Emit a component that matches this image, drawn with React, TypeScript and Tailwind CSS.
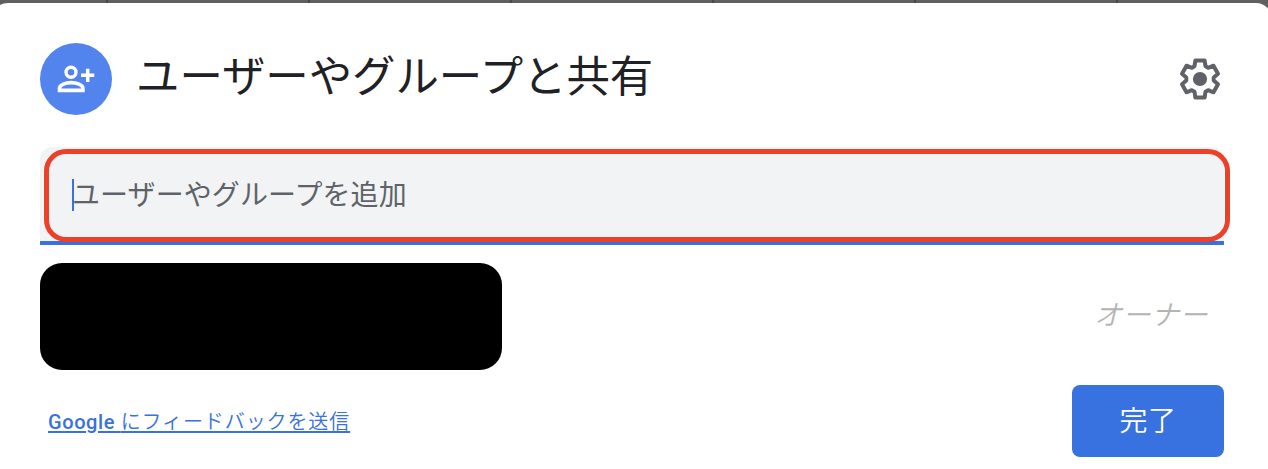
import React from "react";

const gridLines = [0, 1, 2, 3, 4, 5];

function PersonAddIcon() {
  return (
    <svg width="72" height="72" viewBox="0 0 72 72" fill="none" stroke="#fff">
      <circle cx="31" cy="29.3" r="5" strokeWidth="3.4" />
      <path
        d="M19.5 47.4V45.2C19.5 41.6 26 39.6 31.2 39.6S42.9 41.6 42.9 45.2V47.4Z"
        strokeWidth="3.6"
      />
      <path d="M41 32.3H54.3M47.7 25.7V39" strokeWidth="3.5" />
    </svg>
  );
}

function GearIcon() {
  return (
    <svg width="48" height="48" viewBox="-24 -24 48 48" fill="none">
      <path
        d="M-4.6-18.6H4.6L5.5-12.7L8.15-11.2L13.5-13.3L18-5.2L13.7-1.45V1.45L18 5.2L13.5 13.3L8.15 11.2L5.5 12.7L4.6 18.6H-4.6L-5.5 12.7L-8.15 11.2L-13.5 13.3L-18 5.2L-13.7 1.45V-1.45L-18-5.2L-13.5-13.3L-8.15-11.2L-5.5-12.7Z"
        stroke="#5f6368"
        strokeWidth="4"
        strokeLinejoin="round"
      />
      <circle r="7.1" fill="#5f6368" />
    </svg>
  );
}

export default function App() {
  return (
    <div className="relative flex h-[469px] w-[1268px] flex-col overflow-hidden bg-[#606060] font-['Noto_Sans_CJK_JP',sans-serif]">
      <div className="flex h-[3px] shrink-0 gap-[200px] pl-[106px]">
        {gridLines.map((n) => (
          <span key={n} className="h-4 w-[2px] shrink-0 bg-[#484848]" />
        ))}
      </div>
      <section className="-ml-2 flex h-[490px] w-[1280px] shrink-0 flex-col rounded-t-2xl bg-white pr-12 pl-12">
        <header className="mt-10 flex h-[72px] items-center">
          <div className="size-[72px] rounded-full bg-[#5384ed]">
            <PersonAddIcon />
          </div>
          <h1 className="ml-6 flex-1 pb-3 text-[43.4px] leading-[60px] whitespace-nowrap text-[#202124]">
            ユーザーやグループと共有
          </h1>
          <button aria-label="設定">
            <GearIcon />
          </button>
        </header>

        <div className="relative mt-8 flex h-[98px] items-center rounded-t-xl border-b-4 border-[#3871e0] bg-[#f1f3f4] pl-8">
          <span className="mt-[2px] h-8 w-[2px] bg-[#3871e0]" />
          <span className="-ml-[2px] pb-[3px] text-[28px] leading-8 tracking-[0.08px] whitespace-nowrap text-[#5f6368]">
            ユーザーやグループを追加
          </span>
          <div className="absolute top-[2px] left-1 h-[93px] w-[1186px] rounded-[22px] border-5 border-[#ec4128]" />
        </div>

        <div className="mt-[18px] flex h-[107px] items-center justify-between">
          <div className="h-full w-[462px] rounded-[22px] bg-black" />
          <span className="mr-4 pb-2 text-[28px] leading-8 font-[350] tracking-[0.5px] text-[#b4b4b4] italic">
            オーナー
          </span>
        </div>

        <footer className="mt-[15px] flex h-[72px] items-center justify-between">
          <a className="ml-2 text-[20px] leading-[22px] font-[350] whitespace-nowrap text-[#3871e0] underline decoration-2 underline-offset-[2px]">
            <span className="font-[Roboto] font-medium tracking-[0.6px]">Google </span>
            <span className="tracking-[0.9px]">にフィードバックを送信</span>
          </a>
          <button className="h-[72px] w-[152px] rounded-lg bg-[#3871e0] pb-[5px] text-[28px] font-[350] tracking-[0.5px] text-white">
            完了
          </button>
        </footer>
      </section>
    </div>
  );
}
